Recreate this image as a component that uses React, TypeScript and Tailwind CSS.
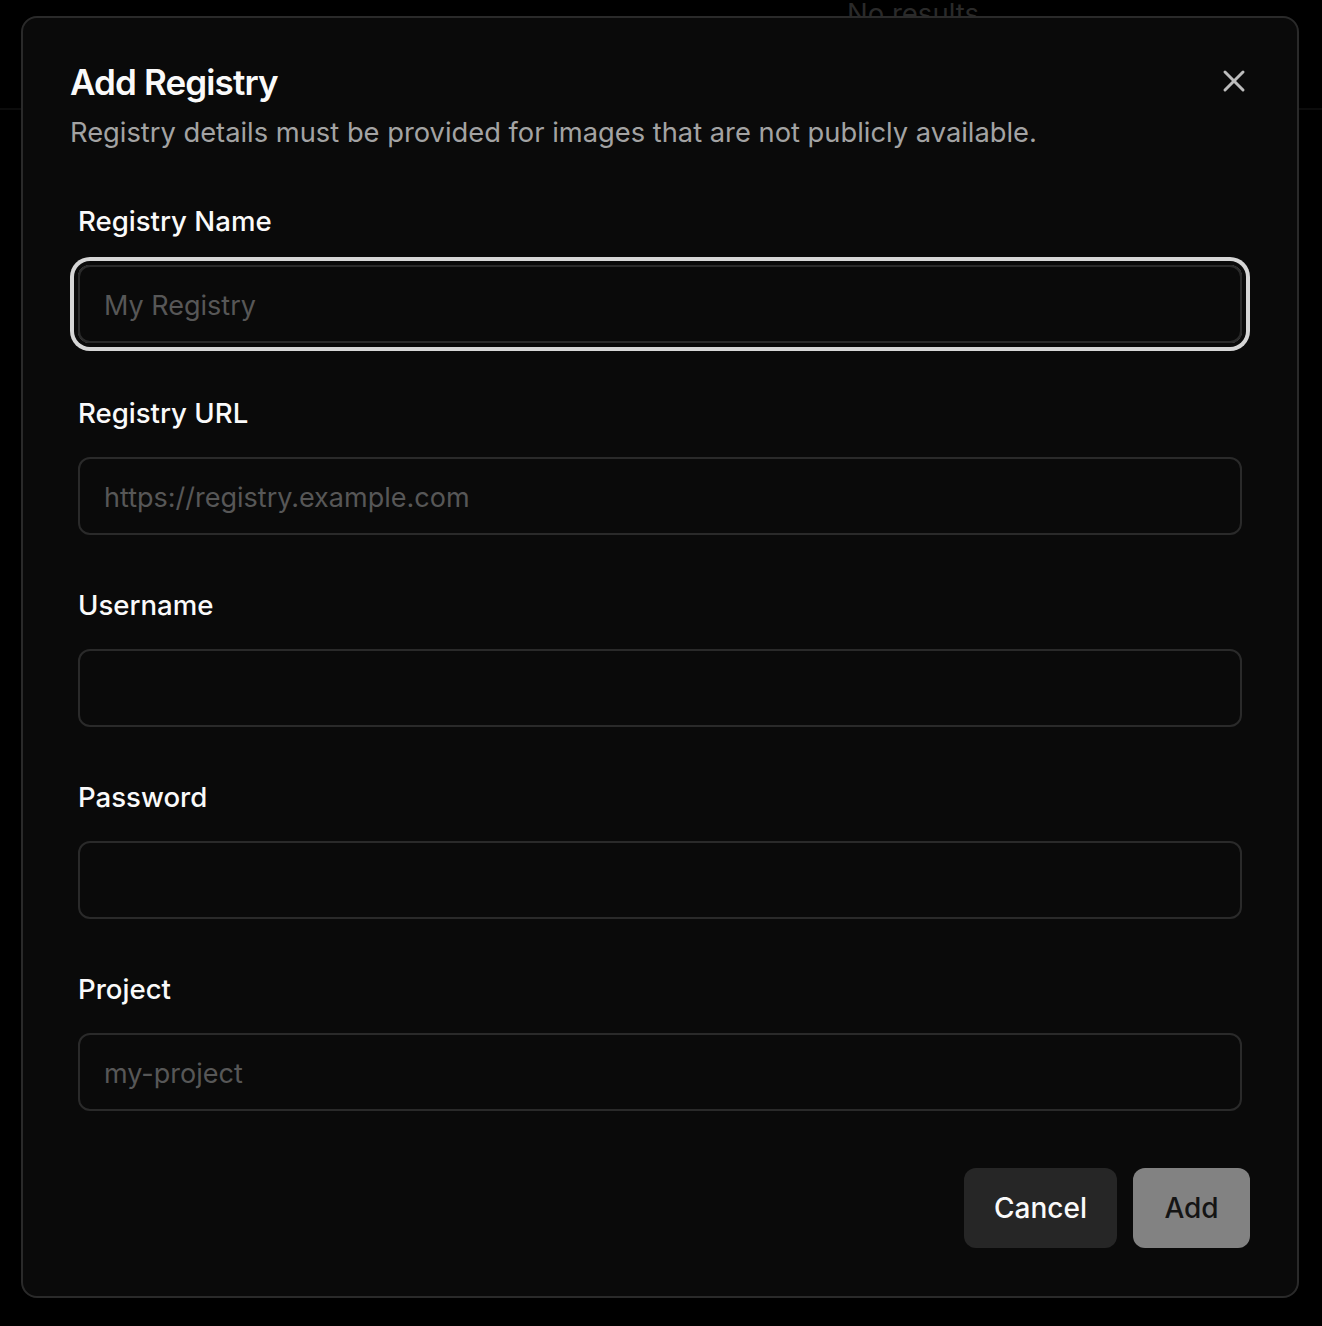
import { X } from 'lucide-react';

const fields = [
  { label: 'Registry Name', placeholder: 'My Registry', focused: true },
  { label: 'Registry URL', placeholder: 'https://registry.example.com' },
  { label: 'Username', placeholder: '' },
  { label: 'Password', placeholder: '', type: 'password' },
  { label: 'Project', placeholder: 'my-project' },
];

function Field({
  label,
  placeholder,
  focused,
  type,
}: {
  label: string;
  placeholder: string;
  focused?: boolean;
  type?: string;
}) {
  return (
    <div className="flex flex-col gap-[30px]">
      <label className="text-[27.6px] leading-[28px] font-medium text-[#fafafa]">{label}</label>
      <input
        type={type ?? 'text'}
        placeholder={placeholder}
        className={
          focused
            ? 'h-[78px] w-full rounded-[12px] border-2 border-[#2a2a2a] bg-transparent px-6 pt-[3px] text-[27px] text-[#fafafa] outline-none placeholder:text-[#575757] ring-4 ring-[#d6d6d6] ring-offset-4 ring-offset-[#0a0a0a]'
            : 'h-[78px] w-full rounded-[12px] border-2 border-[#2a2a2a] bg-transparent px-6 pt-[3px] text-[27px] text-[#fafafa] outline-none placeholder:text-[#575757]'
        }
      />
    </div>
  );
}

export default function App() {
  return (
    <div
      className="relative h-[1326px] w-full overflow-hidden bg-black"
      style={{ fontFamily: 'Inter, "Noto Sans", sans-serif' }}
    >
      {/* page underneath the overlay */}
      <div className="flex h-[110px] flex-col border-b-2 border-[#0c0c0c]">
        <p className="ml-[847px] -mt-[7px] text-[27.5px] leading-[40px] text-[#2a2a2a]">No results</p>
      </div>

      <div className="absolute left-[21px] top-[16px] w-[1278px] rounded-[16px] border-2 border-[#2a2a2a] bg-[#0a0a0a] px-[47px] pt-[46px] pb-[48px]">
        <button className="absolute right-[45px] top-[45px] text-[#bdbdbd]">
          <X className="h-9 w-9" strokeWidth={2} />
        </button>

        <div className="flex flex-col gap-[15px]">
          <h2 className="text-[35px] leading-[36px] font-semibold tracking-tight text-[#fafafa]">Add Registry</h2>
          <p className="text-[27.3px] leading-[36px] text-[#a3a3a3]">
            Registry details must be provided for images that are not publicly available.
          </p>
        </div>

        <div className="mt-[56px] flex flex-col gap-[56px] px-2">
          {fields.map((f) => (
            <Field key={f.label} {...f} />
          ))}
        </div>

        <div className="mt-[57px] flex justify-end gap-4">
          <button className="h-[80px] w-[153px] rounded-[12px] bg-[#262626] text-[28px] font-medium text-[#fafafa]">
            Cancel
          </button>
          <button className="h-[80px] w-[117px] rounded-[12px] bg-[#828282] text-[28px] font-medium text-[#141414]">
            Add
          </button>
        </div>
      </div>
    </div>
  );
}
